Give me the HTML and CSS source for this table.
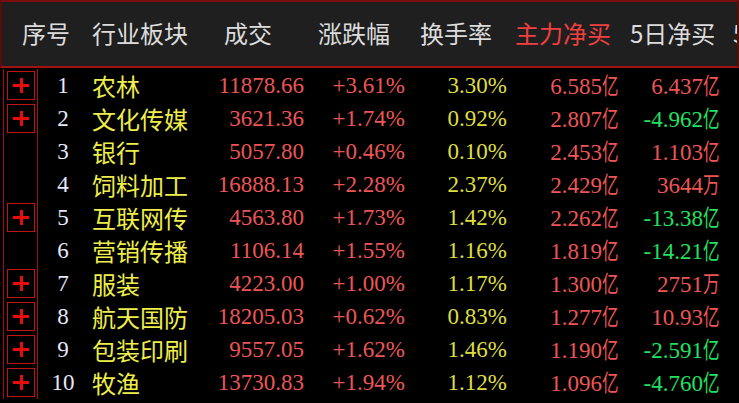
FILE: index.html
```
<!DOCTYPE html>
<html lang="zh-CN">
<head>
    <meta charset="UTF-8">
    <meta name="viewport" content="width=device-width, initial-scale=1.0">
    <title>行业板块资金</title>
    <link rel="stylesheet" href="styles.css">
</head>
<body>
    <div class="board">
        <div class="head">
            <span>序号</span>
            <span>行业板块</span>
            <span>成交</span>
            <span>涨跌幅</span>
            <span>换手率</span>
            <span class="hot">主力净买</span>
            <span>5日净买</span>
            <span>5日</span>
        </div>

        <div class="rows">
            <div class="row">
                <div class="tag"><span class="plus"></span></div>
                <div class="idx">1</div>
                <div class="name">农林</div>
                <div class="num up">11878.66</div>
                <div class="num up">+3.61%</div>
                <div class="num rate">3.30%</div>
                <div class="num up">6.585<span class="unit">亿</span></div>
                <div class="num up">6.437<span class="unit">亿</span></div>
            </div>
            <div class="row">
                <div class="tag"><span class="plus"></span></div>
                <div class="idx">2</div>
                <div class="name">文化传媒</div>
                <div class="num up">3621.36</div>
                <div class="num up">+1.74%</div>
                <div class="num rate">0.92%</div>
                <div class="num up">2.807<span class="unit">亿</span></div>
                <div class="num down">-4.962<span class="unit">亿</span></div>
            </div>
            <div class="row">
                <div class="tag"></div>
                <div class="idx">3</div>
                <div class="name">银行</div>
                <div class="num up">5057.80</div>
                <div class="num up">+0.46%</div>
                <div class="num rate">0.10%</div>
                <div class="num up">2.453<span class="unit">亿</span></div>
                <div class="num up">1.103<span class="unit">亿</span></div>
            </div>
            <div class="row">
                <div class="tag"></div>
                <div class="idx">4</div>
                <div class="name">饲料加工</div>
                <div class="num up">16888.13</div>
                <div class="num up">+2.28%</div>
                <div class="num rate">2.37%</div>
                <div class="num up">2.429<span class="unit">亿</span></div>
                <div class="num up">3644<span class="unit">万</span></div>
            </div>
            <div class="row">
                <div class="tag"><span class="plus"></span></div>
                <div class="idx">5</div>
                <div class="name">互联网传</div>
                <div class="num up">4563.80</div>
                <div class="num up">+1.73%</div>
                <div class="num rate">1.42%</div>
                <div class="num up">2.262<span class="unit">亿</span></div>
                <div class="num down">-13.38<span class="unit">亿</span></div>
            </div>
            <div class="row">
                <div class="tag"></div>
                <div class="idx">6</div>
                <div class="name">营销传播</div>
                <div class="num up">1106.14</div>
                <div class="num up">+1.55%</div>
                <div class="num rate">1.16%</div>
                <div class="num up">1.819<span class="unit">亿</span></div>
                <div class="num down">-14.21<span class="unit">亿</span></div>
            </div>
            <div class="row">
                <div class="tag"><span class="plus"></span></div>
                <div class="idx">7</div>
                <div class="name">服装</div>
                <div class="num up">4223.00</div>
                <div class="num up">+1.00%</div>
                <div class="num rate">1.17%</div>
                <div class="num up">1.300<span class="unit">亿</span></div>
                <div class="num up">2751<span class="unit">万</span></div>
            </div>
            <div class="row">
                <div class="tag"><span class="plus"></span></div>
                <div class="idx">8</div>
                <div class="name">航天国防</div>
                <div class="num up">18205.03</div>
                <div class="num up">+0.62%</div>
                <div class="num rate">0.83%</div>
                <div class="num up">1.277<span class="unit">亿</span></div>
                <div class="num up">10.93<span class="unit">亿</span></div>
            </div>
            <div class="row">
                <div class="tag"><span class="plus"></span></div>
                <div class="idx">9</div>
                <div class="name">包装印刷</div>
                <div class="num up">9557.05</div>
                <div class="num up">+1.62%</div>
                <div class="num rate">1.46%</div>
                <div class="num up">1.190<span class="unit">亿</span></div>
                <div class="num down">-2.591<span class="unit">亿</span></div>
            </div>
            <div class="row">
                <div class="tag"><span class="plus"></span></div>
                <div class="idx">10</div>
                <div class="name">牧渔</div>
                <div class="num up">13730.83</div>
                <div class="num up">+1.94%</div>
                <div class="num rate">1.12%</div>
                <div class="num up">1.096<span class="unit">亿</span></div>
                <div class="num down">-4.760<span class="unit">亿</span></div>
            </div>
        </div>
    </div>
</body>
</html>
```

FILE: styles.css
```
body {
    margin: 0;
    background: #000;
    overflow: hidden;
    font-family: "Liberation Serif", "Noto Sans CJK SC", serif;
}
.board {
    width: 739px;
    height: 403px;
    overflow: hidden;
}
.head {
    display: grid;
    grid-template-columns: 70px 132px 94px 102px 95px 115px 103px 1fr;
    height: 61px;
    align-items: center;
    padding: 0 0 3px 20px;
    background: #1f1f1f;
    border-top: 2px solid #7a0e0e;
    border-bottom: 2px solid #a31212;
    border-left: 2px solid #5a0c0c;
    border-right: 2px solid #5a0c0c;
    font-family: "Noto Sans CJK SC", sans-serif;
    font-size: 24px;
    color: #dcdcdc;
    white-space: nowrap;
    overflow: hidden;
}
.head .hot {
    color: #f04040;
}
.rows {
    padding-top: 1px;
}
.row {
    display: grid;
    grid-template-columns: 38px 50px 112px 104px 101px 102px 112px 101px;
    height: 33px;
    align-items: center;
    font-size: 23px;
    line-height: 31px;
    white-space: nowrap;
}
.tag {
    margin-left: 3px;
    height: 33px;
    border-left: 1px solid #a01010;
    border-right: 1px solid #a01010;
    display: flex;
    align-items: center;
    justify-content: center;
}
.plus {
    width: 26px;
    height: 27px;
    border: 1px solid #c01414;
    position: relative;
}
.plus::before,
.plus::after {
    content: "";
    position: absolute;
    background: #e80c0c;
}
.plus::before {
    left: 5px;
    right: 5px;
    top: 12px;
    height: 3px;
}
.plus::after {
    top: 6px;
    bottom: 6px;
    left: 12px;
    width: 3px;
}
.idx {
    text-align: center;
    color: #e6e8fa;
}
.name {
    padding-left: 4px;
    font-family: "Noto Sans CJK SC", sans-serif;
    font-size: 24px;
    color: #eeee4a;
}
.num {
    text-align: right;
}
.up {
    color: #ec5656;
}
.down {
    color: #22e060;
}
.rate {
    color: #dede40;
}
.unit {
    display: inline-block;
    font-family: "Noto Sans CJK SC", sans-serif;
    font-size: 23px;
    transform: scaleX(0.72);
    transform-origin: left center;
    margin-right: -6px;
}
```
